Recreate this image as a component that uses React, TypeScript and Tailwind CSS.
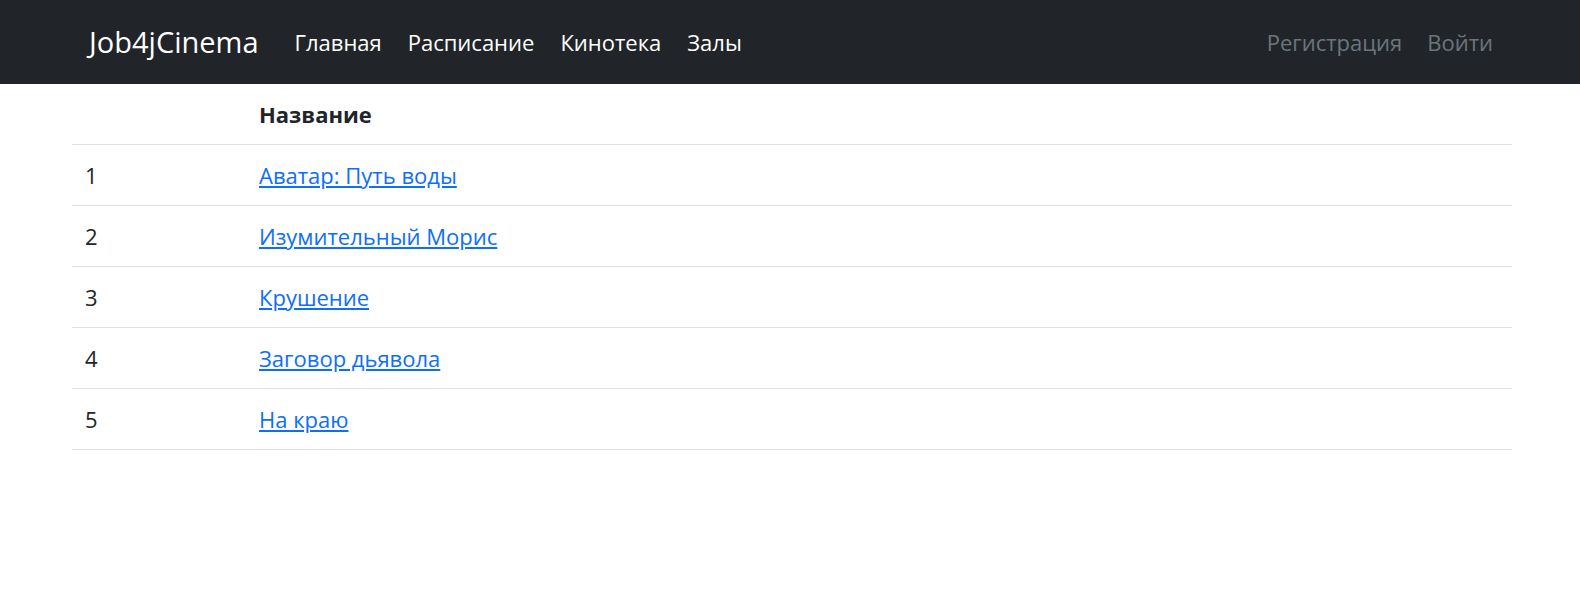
const films = [
  "Аватар: Путь воды",
  "Изумительный Морис",
  "Крушение",
  "Заговор дьявола",
  "На краю",
];

function Navbar() {
  return (
    <nav className="flex h-[84px] items-center bg-[#212529] pl-[89px] pr-[87px]">
      <a href="#" className="mr-[36px] text-[29px] text-white">
        Job4jCinema
      </a>
      <div className="flex gap-[26px] text-[22px] text-white">
        <a href="#">Главная</a>
        <a href="#">Расписание</a>
        <a href="#">Кинотека</a>
        <a href="#">Залы</a>
      </div>
      <div className="ml-auto flex gap-[25px] text-[22px] text-[#6c757d]">
        <a href="#">Регистрация</a>
        <a href="#">Войти</a>
      </div>
    </nav>
  );
}

export default function App() {
  return (
    <div className="min-h-[612px] bg-white font-['Segoe_UI','Open_Sans',sans-serif] text-[#212529]">
      <Navbar />
      <div className="pl-[72px] pr-[68px]">
        <table className="w-full border-collapse text-left text-[22px] leading-[30px]">
          <thead>
            <tr className="border-b border-[#dee2e6]">
              <th className="h-[60px] w-[174px] px-[13px]"></th>
              <th className="h-[60px] px-[13px] font-bold">Название</th>
            </tr>
          </thead>
          <tbody>
            {films.map((name, i) => (
              <tr key={name} className="border-b border-[#dee2e6]">
                <td className="h-[61px] px-[13px]">{i + 1}</td>
                <td className="h-[61px] px-[13px]">
                  <a href="#" className="text-[#0d6efd] underline">
                    {name}
                  </a>
                </td>
              </tr>
            ))}
          </tbody>
        </table>
      </div>
    </div>
  );
}
